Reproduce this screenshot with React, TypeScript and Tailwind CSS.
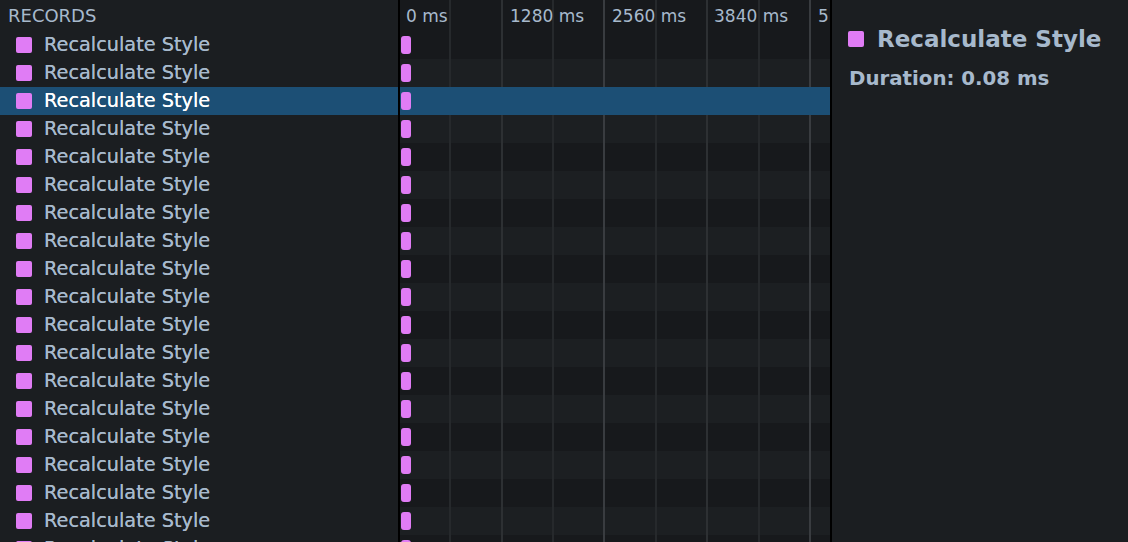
import React from "react"

const rows = Array.from({ length: 20 }, (_, i) => i)
const selected = 2

// vertical grid lines across the timeline, px from its left edge
const lines = [
    { x: 49, c: "bg-[#26292c]" },
    { x: 101, c: "bg-[#2d3033]" },
    { x: 152, c: "bg-[#26292c]" },
    { x: 203, c: "bg-[#393c40]" },
    { x: 255, c: "bg-[#26292c]" },
    { x: 306, c: "bg-[#2d3033]" },
    { x: 358, c: "bg-[#26292c]" },
    { x: 409, c: "bg-[#393c40]" },
]

const labels = [
    { x: 6, t: "0 ms" },
    { x: 110, t: "1280 ms" },
    { x: 212, t: "2560 ms" },
    { x: 314, t: "3840 ms" },
    { x: 418, t: "5120 ms" },
]

export default function App() {
    return (
        <div className="flex h-[542px] w-[1128px] overflow-hidden bg-[#1b1e21] font-['DejaVu_Sans',sans-serif] text-[#a7b9cc]">
            {/* records list */}
            <div className="w-[398px] shrink-0">
                <div className="flex h-[31px] items-center pl-2 text-[18px] leading-none">RECORDS</div>
                {rows.map((i) => (
                    <div
                        key={i}
                        className={`flex h-[28px] items-center pl-4 ${i === selected ? "bg-[#1c4f75] text-white" : ""}`}
                    >
                        <span className="h-4 w-4 shrink-0 rounded-[2px] bg-[#e07cf5]" />
                        <span className="ml-3 text-[19.3px] leading-none [text-shadow:0_0_0.4px_currentColor]">
                            Recalculate Style
                        </span>
                    </div>
                ))}
            </div>

            <div className="w-[2px] shrink-0 bg-black" />

            {/* timeline */}
            <div className="relative w-[430px] shrink-0 overflow-hidden bg-[#17191c]">
                {lines.map((l) => (
                    <div key={l.x} className={`absolute top-0 bottom-0 w-[2px] ${l.c}`} style={{ left: l.x }} />
                ))}
                <div className="relative h-[31px] text-[17px] leading-none">
                    {labels.map((l) => (
                        <span key={l.x} className="absolute top-[8px] whitespace-nowrap" style={{ left: l.x }}>
                            {l.t}
                        </span>
                    ))}
                </div>
                {rows.map((i) => (
                    <div
                        key={i}
                        className={`flex h-[28px] items-center pl-px ${
                            i === selected ? "relative z-10 bg-[#1c4f75]" : i % 2 === 1 ? "bg-[#1c1f22]" : ""
                        }`}
                    >
                        <span className="relative z-10 h-[18px] w-[10px] rounded-[3px] bg-[#e07cf5]" />
                    </div>
                ))}
            </div>

            <div className="w-[2px] shrink-0 bg-black" />

            {/* details */}
            <div className="flex-1 pl-4 pt-[23px]">
                <div className="flex h-[32px] items-center">
                    <span className="h-4 w-4 shrink-0 rounded-[2px] bg-[#e07cf5]" />
                    <span className="ml-[13px] text-[23px] font-bold leading-none">Recalculate Style</span>
                </div>
                <div className="mt-[14px] pl-px text-[19.8px] font-bold leading-none">Duration: 0.08 ms</div>
            </div>
        </div>
    )
}
